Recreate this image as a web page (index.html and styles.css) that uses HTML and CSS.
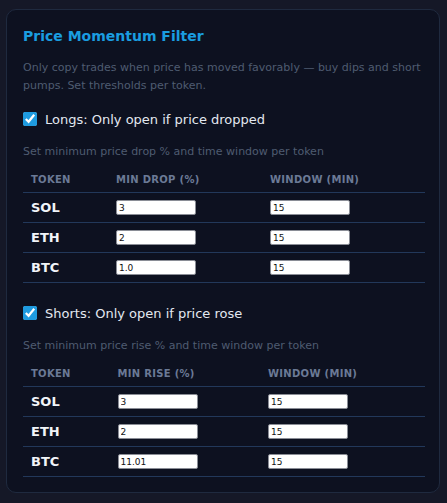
FILE: index.html
```html
<!DOCTYPE html>
<html>
<head>
<meta charset="utf-8">
<link rel="stylesheet" href="styles.css">
</head>
<body>
<div class="page">
  <section class="card">
    <h2 class="title">Price Momentum Filter</h2>
    <p class="desc">Only copy trades when price has moved favorably — buy dips and short pumps. Set thresholds per token.</p>

    <label class="check-row"><input type="checkbox" class="check" checked><span>Longs: Only open if price dropped</span></label>
    <p class="sub">Set minimum price drop % and time window per token</p>
    <table class="grid grid-a">
      <thead>
        <tr><th class="c1">Token</th><th class="c2">Min Drop (%)</th><th class="c3">Window (min)</th></tr>
      </thead>
      <tbody>
        <tr><td class="tok">SOL</td><td><input class="num" type="text" value="3"></td><td><input class="num" type="text" value="15"></td></tr>
        <tr><td class="tok">ETH</td><td><input class="num" type="text" value="2"></td><td><input class="num" type="text" value="15"></td></tr>
        <tr><td class="tok">BTC</td><td><input class="num" type="text" value="1.0"></td><td><input class="num" type="text" value="15"></td></tr>
      </tbody>
    </table>

    <label class="check-row second"><input type="checkbox" class="check" checked><span>Shorts: Only open if price rose</span></label>
    <p class="sub">Set minimum price rise % and time window per token</p>
    <table class="grid grid-b">
      <thead>
        <tr><th class="c1">Token</th><th class="c2">Min Rise (%)</th><th class="c3">Window (min)</th></tr>
      </thead>
      <tbody>
        <tr><td class="tok">SOL</td><td><input class="num" type="text" value="3"></td><td><input class="num" type="text" value="15"></td></tr>
        <tr><td class="tok">ETH</td><td><input class="num" type="text" value="2"></td><td><input class="num" type="text" value="15"></td></tr>
        <tr><td class="tok">BTC</td><td><input class="num" type="text" value="11.01"></td><td><input class="num" type="text" value="15"></td></tr>
      </tbody>
    </table>
  </section>
</div>
</body>
</html>
```
FILE: styles.css
```css
html, body {
  margin: 0;
  padding: 0;
  background: #151827;
  font-family: "DejaVu Sans", Verdana, sans-serif;
}
.page {
  padding: 9px 7px 12px 6px;
}
.card {
  background: #0d1120;
  border: 1px solid #1f2a3f;
  border-radius: 10px;
  padding: 15px 15px 15px 16px;
}
.title {
  margin: 0 0 12px 0;
  font-size: 14px;
  line-height: 22px;
  font-weight: bold;
  color: #1a9de0;
}
.desc {
  margin: 0 0 14px 0;
  font-size: 11px;
  line-height: 18px;
  color: #4f5c71;
}
.check-row {
  display: flex;
  align-items: center;
  gap: 8px;
  height: 20px;
  margin: 0 0 14px 0;
  font-size: 13px;
  color: #e3e8f0;
}
.check-row.second {
  margin-top: 20px;
}
.check {
  margin: 0;
  width: 14px;
  height: 14px;
  accent-color: #1e9be0;
}
.sub {
  margin: 0 0 6px 0;
  font-size: 11px;
  line-height: 18px;
  color: #4f5c71;
}
.grid {
  width: 402px;
  border-collapse: collapse;
  table-layout: fixed;
}
.grid th {
  text-align: left;
  font-size: 10px;
  font-weight: bold;
  letter-spacing: 0.3px;
  text-transform: uppercase;
  color: #6b7a96;
  height: 25px;
  padding: 0 8px;
  border-bottom: 1px solid #22385a;
}
.grid td {
  height: 29px;
  padding: 0 8px;
  border-bottom: 1px solid #22385a;
}
.grid-a .c1 { width: 69px; }
.grid-a .c2 { width: 138px; }
.grid-b .c1 { width: 70.5px; }
.grid-b .c2 { width: 134.5px; }
.tok {
  font-size: 13px;
  font-weight: bold;
  color: #f1f4f8;
}
.num {
  box-sizing: border-box;
  width: 80px;
  height: 15px;
  margin: 0;
  padding: 0 2px;
  border: 1px solid #8a8d96;
  border-radius: 2px;
  background: #ffffff;
  color: #111;
  font-family: "DejaVu Sans", sans-serif;
  font-size: 9px;
  display: block;
}
```
